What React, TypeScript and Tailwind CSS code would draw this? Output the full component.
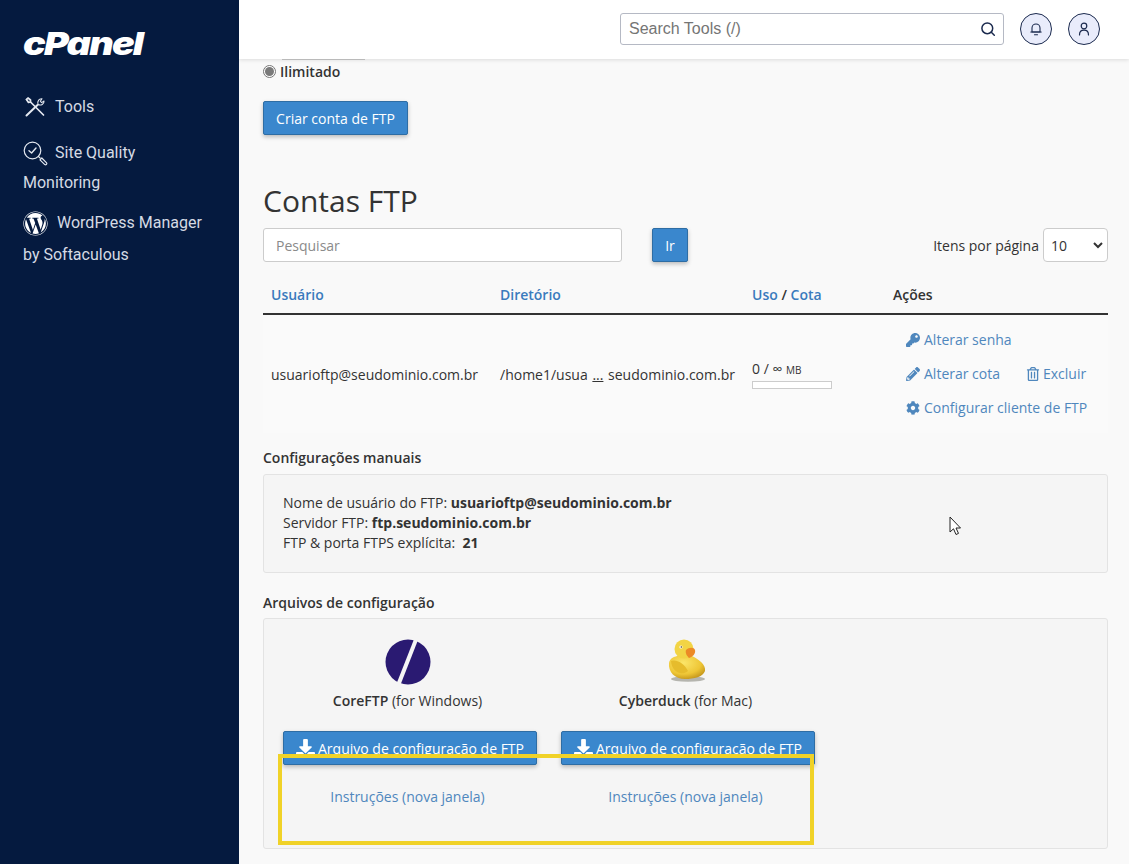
import { FaCog, FaDownload, FaKey, FaPencilAlt, FaRegTrashAlt, FaWordpress } from 'react-icons/fa';

function ToolsIcon() {
  return (
    <svg width="22" height="22" viewBox="0 0 22 22" fill="none" stroke="#e4e8f0" strokeWidth="1.7" strokeLinecap="round" strokeLinejoin="round">
      <path d="M2.5 3.5 L4 2 L6.5 4 L6.5 6 L19.5 19" />
      <path d="M2.5 3.5 L4.5 6.5 L6.5 6" />
      <path d="M2.5 19.5 L13.5 9" strokeWidth="2" />
      <path d="M14 8.5 C13 5.5 15 2.5 18 2.8 L16.3 5.2 L17.6 6.6 L20 5 C20.3 8 17 10 14 8.5 Z" strokeWidth="1.1" />
    </svg>
  );
}

function QualityIcon() {
  return (
    <svg width="25" height="25" viewBox="0 0 25 25" fill="none" stroke="#e4e8f0" strokeWidth="1.2" strokeLinecap="round" strokeLinejoin="round">
      <circle cx="9.5" cy="9.5" r="8.3" />
      <path d="M6 9.8 L8.6 12 L13 7" strokeWidth="1.4" />
      <path d="M15.5 15.5 L17.2 17.2" />
      <path d="M17 18.8 L18.8 17 L23.6 21.8 A1.3 1.3 0 0 1 21.8 23.6 Z" />
    </svg>
  );
}

function BellIcon() {
  return (
    <svg width="14" height="14" viewBox="0 0 14 14" fill="none" stroke="#1b2a4e" strokeWidth="1.1" strokeLinecap="round" strokeLinejoin="round">
      <path d="M3 10 V6 A4 4 0 0 1 11 6 V10 Z" />
      <path d="M1.8 10 H12.2" />
      <path d="M5.5 12.7 H8.5" />
    </svg>
  );
}

function UserIcon() {
  return (
    <svg width="14" height="14" viewBox="0 0 14 14" fill="none" stroke="#1b2a4e" strokeWidth="1.2" strokeLinecap="round" strokeLinejoin="round">
      <circle cx="7" cy="4" r="2.8" />
      <path d="M2.5 13 C2.5 9.8 4.5 8.2 7 8.2 C9.5 8.2 11.5 9.8 11.5 13" />
    </svg>
  );
}

function SearchIcon() {
  return (
    <svg width="16" height="16" viewBox="0 0 16 16" fill="none" stroke="#1b2a4e" strokeWidth="1.5" strokeLinecap="round">
      <circle cx="7.3" cy="7.3" r="5.4" />
      <path d="M11.3 11.3 L14.3 14.3" />
    </svg>
  );
}

function CoreFtpLogo() {
  return (
    <svg width="46" height="46" viewBox="0 0 46 46">
      <circle cx="23" cy="23" r="22.5" fill="#2a1a72" />
      <path d="M29.5 -1 L33 1 L15 47 L11 46 Z" fill="#f5f5f5" />
    </svg>
  );
}

function DuckLogo() {
  return (
    <svg width="44" height="46" viewBox="0 0 44 46">
      <defs>
        <radialGradient id="duckBody" cx="40%" cy="30%" r="75%">
          <stop offset="0%" stopColor="#fbe66a" />
          <stop offset="65%" stopColor="#eec636" />
          <stop offset="100%" stopColor="#c2931a" />
        </radialGradient>
      </defs>
      <ellipse cx="24" cy="40" rx="17" ry="2.8" fill="#8a8a80" opacity="0.6" />
      <path d="M5 24 C6 19 10 18 13 17 L28 17 C36 21 42 26 41 32 C39 38 30 40 21 40 C11 40 4 33 5 24 Z" fill="url(#duckBody)" />
      <circle cx="20" cy="10" r="9.5" fill="#f2d445" />
      <path d="M22 11 C25 8 30 8 31 11 C32 15 28 18 25 19 C23 17 21 14 22 11 Z" fill="#ec8a26" />
      <circle cx="17" cy="8" r="1.6" fill="#fff" />
      <circle cx="17.3" cy="8" r="0.8" fill="#4a3a18" />
      <path d="M7 22 C12 20 20 24 24 32 C18 37 8 34 7 22 Z" fill="#e6bc2c" />
    </svg>
  );
}

function ClientCard({ name, platform, logo }: { name: string; platform: string; logo: React.ReactNode }) {
  return (
    <div className="flex w-[254px] flex-col items-center">
      <div className="mr-[5px] flex h-[48px] items-end justify-center">{logo}</div>
      <div className="mr-[5px] mt-[6px] text-[14px] leading-[20px] text-[#333]">
        <span className="font-semibold">{name}</span> ({platform})
      </div>
      <button
        type="button"
        className="mt-[20px] flex h-[34px] w-[254px] items-center justify-center gap-[3px] rounded-[2px] border border-[#2e6da4] bg-[#3a87cd] text-[14px] text-white shadow-[0_2px_4px_rgba(0,0,0,0.25)]"
      >
        <FaDownload size={19} />
        Arquivo de configuração de FTP
      </button>
      <a className="mr-[5px] mt-[22px] text-[14px] leading-[20px] text-[#4f87bd]">Instruções (nova janela)</a>
    </div>
  );
}

export default function App() {
  return (
    <div className="relative flex h-[864px] w-[1129px] overflow-hidden bg-[#f9f9f9] font-['Open_Sans',sans-serif] text-[14px] text-[#333]">
      <aside className="flex w-[239px] shrink-0 flex-col bg-[#051a3f] pl-[23px] pr-[16px] font-['Roboto',sans-serif] text-[16px] text-[#d5dae4]">
        <div className="mt-[24px] h-[39px] origin-left scale-x-[1.18] font-['Inter',sans-serif] text-[32px] leading-[39px] font-black tracking-[-1.5px] text-white italic">
          cPanel
        </div>
        <div className="mt-[30px] flex h-[28px] items-center gap-[9px] pl-[1px]">
          <ToolsIcon />
          <span>Tools</span>
        </div>
        <div className="mt-[17px] leading-[30px]">
          <div className="flex items-center gap-[7px]">
            <QualityIcon />
            <span>Site Quality</span>
          </div>
          <div>Monitoring</div>
        </div>
        <div className="mt-[9px] leading-[32px]">
          <div className="flex items-center gap-[9px]">
            <FaWordpress size={25} color="#fff" />
            <span>WordPress Manager</span>
          </div>
          <div>by Softaculous</div>
        </div>
      </aside>

      <div className="flex min-w-0 flex-1 flex-col">
        <header className="z-10 flex h-[59px] shrink-0 items-start bg-white pl-[381px] pr-[29px] pt-[13px] shadow-[0_1px_4px_rgba(0,0,0,0.12)]">
          <div className="flex h-[32px] w-[384px] items-center justify-between rounded-[3px] border border-[#b5b9c4] pl-[8px] pr-[7px] font-['Liberation_Sans',sans-serif] text-[16px] text-[#757575]">
            <span>Search Tools (/)</span>
            <SearchIcon />
          </div>
          <div className="ml-[16px] flex h-[32px] w-[32px] items-center justify-center rounded-full border border-[#1b2a4e] bg-[#e9ecfb]">
            <BellIcon />
          </div>
          <div className="ml-[16px] flex h-[32px] w-[32px] items-center justify-center rounded-full border border-[#1b2a4e] bg-[#e9ecfb]">
            <UserIcon />
          </div>
        </header>

        <main className="flex flex-1 flex-col pl-[24px] pr-[21px]">
          <div className="ml-[19px] h-px w-[83px] bg-[#c9c9c9]" />
          <label className="mt-px flex h-[20px] items-center gap-[4px] font-semibold">
            <span className="flex h-[13px] w-[13px] items-center justify-center rounded-full border border-[#767676] bg-white">
              <span className="h-[9px] w-[9px] rounded-full bg-[#7a7a7a]" />
            </span>
            Ilimitado
          </label>
          <button
            type="button"
            className="mt-[20px] h-[34px] w-[145px] rounded-[2px] border border-[#2e6da4] bg-[#3a87cd] text-white shadow-[0_2px_4px_rgba(0,0,0,0.25)]"
          >
            Criar conta de FTP
          </button>

          <h1 className="mt-[45px] text-[30px] leading-[41px] font-normal text-[#333]">Contas FTP</h1>

          <div className="mt-[7px] flex items-center">
            <div className="flex h-[34px] w-[359px] items-center rounded-[3px] border border-[#ccc] bg-white pl-[12px] text-[#8a8a8a]">
              Pesquisar
            </div>
            <button
              type="button"
              className="ml-[30px] h-[34px] w-[36px] rounded-[2px] border border-[#2e6da4] bg-[#3a87cd] text-white shadow-[0_2px_4px_rgba(0,0,0,0.25)]"
            >
              Ir
            </button>
            <span className="ml-auto">Itens por página</span>
            <div className="ml-[4px] flex h-[34px] w-[65px] items-center justify-between rounded-[4px] border border-[#ccc] bg-white pl-[7px] pr-[3px]">
              10
              <svg width="12" height="12" viewBox="0 0 12 12" fill="none" stroke="#333" strokeWidth="2">
                <path d="M2 4 L6 8 L10 4" />
              </svg>
            </div>
          </div>

          <div className="mt-[22px] flex h-[31px] items-start border-b-2 border-[#333] pl-[8px] font-semibold text-[#3a7bbd]">
            <span className="w-[229px]">Usuário</span>
            <span className="w-[252px]">Diretório</span>
            <span className="w-[141px]">
              Uso <span className="text-[#333]">/</span> Cota
            </span>
            <span className="text-[#333]">Ações</span>
          </div>

          <div className="flex h-[118px] items-center bg-[#fafafa] pl-[8px]">
            <span className="w-[229px]">usuarioftp@seudominio.com.br</span>
            <span className="w-[252px]">
              /home1/usua <span className="mx-[1px] underline">...</span> seudominio.com.br
            </span>
            <div className="w-[154px]">
              <div className="leading-[20px]">
                0 / ∞ <span className="text-[10px]">MB</span>
              </div>
              <div className="mt-[1px] h-[8px] w-[80px] border border-[#ccc] bg-white" />
            </div>
            <div className="flex flex-col gap-[14px] leading-[20px] text-[#4f87bd]">
              <div className="flex items-center gap-[4px]">
                <FaKey size={14} />
                Alterar senha
              </div>
              <div className="flex items-center">
                <FaPencilAlt size={14} />
                <span className="ml-[4px] w-[102px]">Alterar cota</span>
                <FaRegTrashAlt size={14} />
                <span className="ml-[3px]">Excluir</span>
              </div>
              <div className="flex items-center gap-[4px]">
                <FaCog size={14} />
                Configurar cliente de FTP
              </div>
            </div>
          </div>

          <h2 className="mt-[15px] leading-[20px] font-semibold">Configurações manuais</h2>
          <div className="mt-[6px] h-[99px] rounded-[3px] border border-[#e3e3e3] bg-[#f5f5f5] px-[19px] pt-[18px] leading-[20px]">
            <div>
              Nome de usuário do FTP: <b>usuarioftp@seudominio.com.br</b>
            </div>
            <div>
              Servidor FTP: <b>ftp.seudominio.com.br</b>
            </div>
            <div>
              FTP &amp; porta FTPS explícita: &nbsp;<b>21</b>
            </div>
          </div>

          <h2 className="mt-[20px] leading-[20px] font-semibold">Arquivos de configuração</h2>
          <div className="mt-[5px] flex h-[231px] gap-[24px] rounded-[3px] border border-[#e3e3e3] bg-[#f5f5f5] pl-[19px] pt-[18px]">
            <ClientCard name="CoreFTP" platform="for Windows" logo={<CoreFtpLogo />} />
            <ClientCard name="Cyberduck" platform="for Mac" logo={<DuckLogo />} />
          </div>
        </main>
      </div>

      <div className="absolute left-[278px] top-[754px] h-[91px] w-[536px] border-[4px] border-[#f0d228]" />
      <svg className="absolute left-[949px] top-[516px]" width="13" height="20" viewBox="0 0 13 20" fill="#fff" stroke="#222" strokeWidth="1">
        <path d="M1 1 V16 L4.5 12.8 L7 18.5 L9.5 17.4 L7 12 H11.5 Z" />
      </svg>
    </div>
  );
}
